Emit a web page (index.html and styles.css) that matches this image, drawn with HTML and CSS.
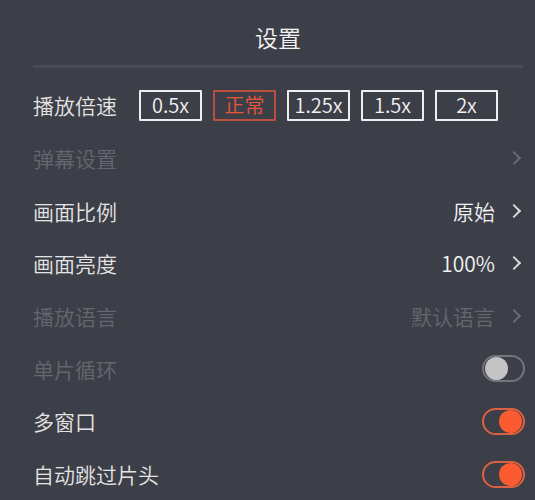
FILE: index.html
```html
<!DOCTYPE html>
<html lang="zh-CN">

<head>
    <meta charset="UTF-8">
    <meta name="viewport" content="width=device-width, initial-scale=1.0">
    <title>设置</title>
    <link rel="stylesheet" href="styles.css">
</head>

<body>
    <div class="panel">
        <h1 class="panel-title">设置</h1>
        <div class="divider"></div>

        <!-- Playback speed -->
        <div class="row">
            <span class="label">播放倍速</span>
            <div class="speeds">
                <button class="speed">0.5x</button>
                <button class="speed active">正常</button>
                <button class="speed">1.25x</button>
                <button class="speed">1.5x</button>
                <button class="speed">2x</button>
            </div>
        </div>

        <div class="row disabled">
            <span class="label">弹幕设置</span>
            <span class="value"></span>
            <span class="chevron"></span>
        </div>

        <div class="row">
            <span class="label">画面比例</span>
            <span class="value">原始</span>
            <span class="chevron"></span>
        </div>

        <div class="row">
            <span class="label">画面亮度</span>
            <span class="value">100%</span>
            <span class="chevron"></span>
        </div>

        <div class="row disabled">
            <span class="label">播放语言</span>
            <span class="value">默认语言</span>
            <span class="chevron"></span>
        </div>

        <!-- Switches -->
        <div class="row disabled">
            <span class="label">单片循环</span>
            <span class="switch"></span>
        </div>

        <div class="row">
            <span class="label">多窗口</span>
            <span class="switch on"></span>
        </div>

        <div class="row">
            <span class="label">自动跳过片头</span>
            <span class="switch on"></span>
        </div>
    </div>
</body>

</html>
```

FILE: styles.css
```css
body {
    font-family: "Noto Sans CJK SC", "Noto Sans", sans-serif;
    background-color: #3d3f48;
    color: #e6e6e6;
    margin: 0;
    padding: 0;
}

.panel {
    padding: 22px 12px 0 33px;
}

.panel-title {
    margin: 0;
    text-align: center;
    font-size: 23px;
    font-weight: 350;
    line-height: 30px;
    color: #f4f4f4;
}

.divider {
    height: 3px;
    margin-top: 13px;
    margin-bottom: 11px;
    background-color: #4a4c55;
}

.row {
    display: flex;
    align-items: center;
    height: 52.7px;
    font-size: 21px;
    font-weight: 350;
}

.label {
    flex: 1;
    color: #e4e4e4;
}

.value {
    color: #f2f2f2;
}

.chevron {
    width: 8px;
    height: 8px;
    border-top: 2px solid #d8d8d8;
    border-right: 2px solid #d8d8d8;
    transform: rotate(45deg);
    margin: 0 4px 0 14px;
}

.row.disabled .label,
.row.disabled .value {
    color: #65676e;
}

.row.disabled .chevron {
    border-color: #6a6b72;
}

/* Speed buttons */
.speeds {
    display: flex;
    gap: 11px;
    margin-right: 25px;
}

.speed {
    width: 63px;
    height: 31px;
    padding: 0;
    font-family: inherit;
    font-size: 20px;
    font-weight: 350;
    line-height: 26px;
    color: #f2f2f2;
    background: transparent;
    border: 2px solid #eeeeee;
    border-radius: 1px;
}

.speed.active {
    color: #ea553b;
    border-color: #b9503f;
}

/* Toggle switches */
.switch {
    position: relative;
    width: 39px;
    height: 23px;
    border: 2px solid #74757b;
    border-radius: 14px;
    margin-right: -2px;
}

.switch::after {
    content: "";
    position: absolute;
    top: 0;
    left: 1px;
    width: 23px;
    height: 23px;
    border-radius: 50%;
    background-color: #c4c4c6;
}

.switch.on {
    border-color: #dd6041;
}

.switch.on::after {
    left: auto;
    right: 1px;
    background-color: #fa5b30;
}
```
